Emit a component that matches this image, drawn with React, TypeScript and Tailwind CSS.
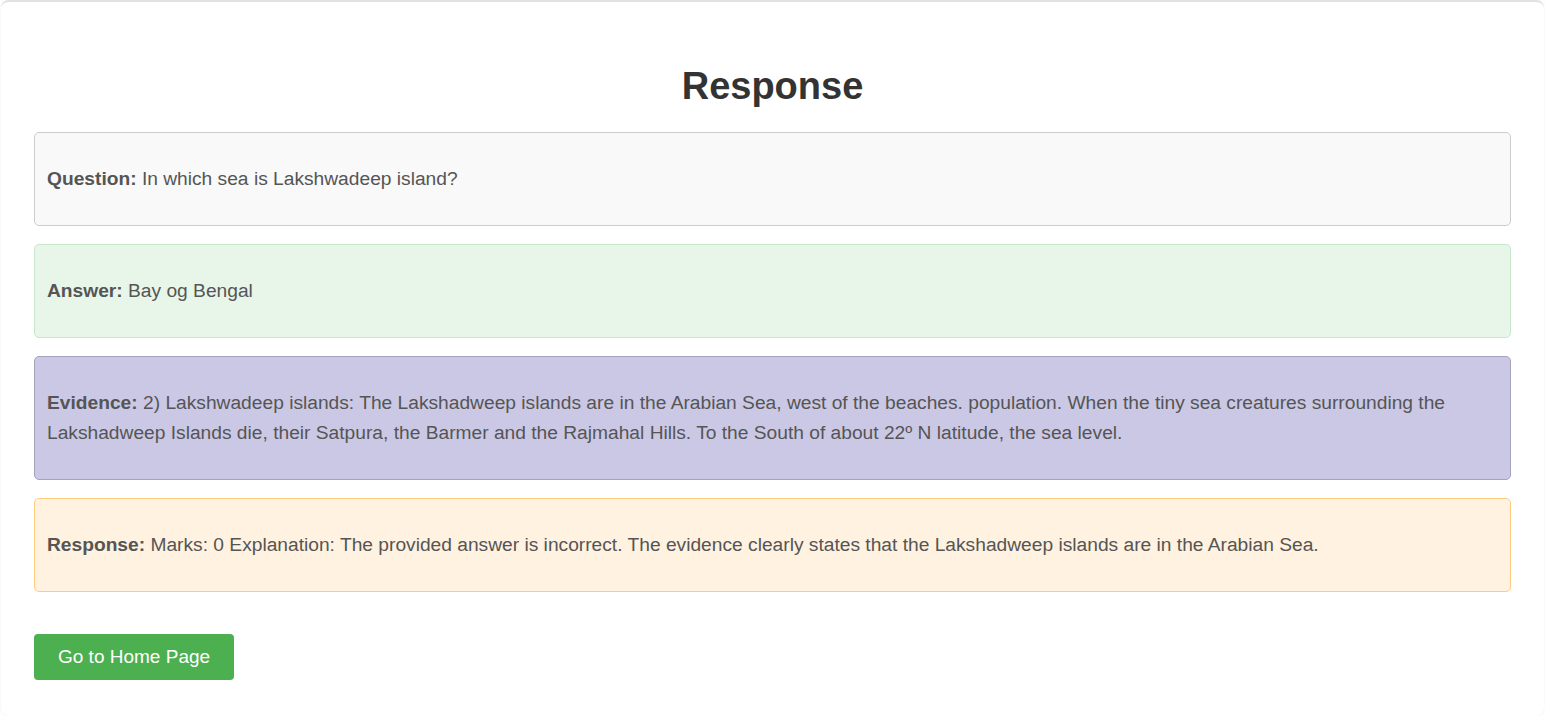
import React from "react";

const font = { fontFamily: '"Liberation Sans", Arial, sans-serif' };

function Box({ label, text, cls }: { label: string; text: string; cls: string }) {
  return (
    <div className={`rounded-[5px] border px-[12px] py-[31px] text-[19.2px] leading-[30px] text-[#555] ${cls}`}>
      <strong className="font-bold">{label}</strong> {text}
    </div>
  );
}

export default function App() {
  return (
    <div className="min-h-screen bg-white" style={font}>
      <div className="mx-[1px] rounded-lg border-t-2 border-[#e2e2e2] bg-white px-[33px] pt-[62px] pb-[36px] shadow-[0_0_2px_rgba(0,0,0,0.08)]">
        <h1 className="text-center text-[38px] font-bold leading-[44px] text-[#333]">Response</h1>
        <div className="mt-[24px] flex flex-col gap-[18px]">
          <Box cls="bg-[#f9f9f9] border-[#cccccc]" label="Question:" text="In which sea is Lakshwadeep island?" />
          <Box cls="bg-[#e8f5e9] border-[#c8e6c9]" label="Answer:" text="Bay og Bengal" />
          <Box
            cls="bg-[#cbc8e5] border-[#a5a2bd]"
            label="Evidence:"
            text="2) Lakshwadeep islands: The Lakshadweep islands are in the Arabian Sea, west of the beaches. population. When the tiny sea creatures surrounding the Lakshadweep Islands die, their Satpura, the Barmer and the Rajmahal Hills. To the South of about 22º N latitude, the sea level."
          />
          <Box
            cls="bg-[#fff2e0] border-[#ffcc80]"
            label="Response:"
            text="Marks: 0 Explanation: The provided answer is incorrect. The evidence clearly states that the Lakshadweep islands are in the Arabian Sea."
          />
        </div>
        <button className="mt-[42px] h-[46px] rounded-[4px] bg-[#4caf50] px-[24px] text-[19px] text-white">
          Go to Home Page
        </button>
      </div>
    </div>
  );
}
